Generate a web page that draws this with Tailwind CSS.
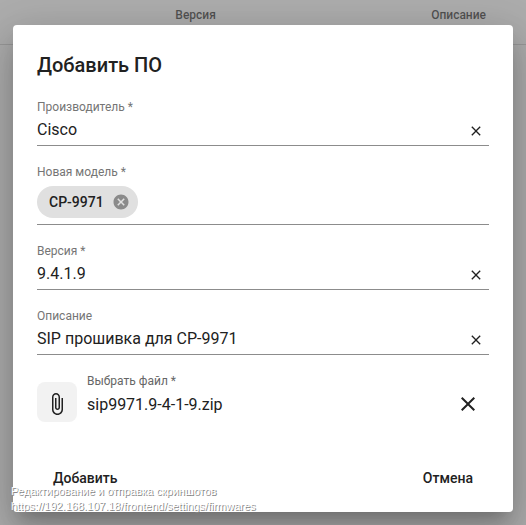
<!DOCTYPE html>
<html lang="ru" class="bg-white">

<head>
  <meta charset="UTF-8">
  <meta name="viewport" content="width=device-width, initial-scale=1">
  <script src="https://cdn.jsdelivr.net/npm/@tailwindcss/browser@4"></script>
  <title>Добавить ПО</title>
</head>

<body class="relative min-h-screen overflow-hidden font-[Roboto,sans-serif] text-[#212121]">
  <!-- firmware list under the dialog -->
  <table class="w-full table-fixed text-left text-xs">
    <thead>
      <tr class="h-11 border-b border-black/12 align-top text-black/54">
        <td class="w-1/3"></td>
        <th class="pt-[7px] font-medium">Версия</th>
        <th class="pt-[7px] pr-10 text-right font-medium">Описание</th>
      </tr>
    </thead>
  </table>

  <div class="absolute inset-0 bg-black/32 px-[13px] pt-[25px]">
    <form role="dialog" aria-labelledby="title" class="flex flex-col gap-[18px] rounded bg-white px-6 pt-6 pb-4 shadow-[0_11px_15px_-7px_rgba(0,0,0,0.2),0_24px_38px_3px_rgba(0,0,0,0.14),0_9px_46px_8px_rgba(0,0,0,0.12)]">
      <h1 id="title" class="text-xl leading-8 font-medium">Добавить ПО</h1>

      <div class="flex flex-col border-b border-[#8c8c8c]">
        <label for="vendor" class="text-xs text-[#757575]">Производитель *</label>
        <div class="flex items-end">
          <input id="vendor" type="text" value="Cisco" class="h-[30px] min-w-0 flex-1 pb-0.5 outline-none">
          <button type="button" aria-label="Очистить" class="flex h-7 w-[26px] items-center justify-center">
            <svg class="size-4" viewBox="0 0 24 24" fill="currentColor"><path d="M19 6.41L17.59 5 12 10.59 6.41 5 5 6.41 10.59 12 5 17.59 6.41 19 12 13.41 17.59 19 19 17.59 13.41 12z"/></svg>
          </button>
        </div>
      </div>

      <div class="flex flex-col border-b border-[#8c8c8c] pb-1.5">
        <span class="text-xs text-[#757575]">Новая модель *</span>
        <div class="mt-1.5 flex h-8 items-center gap-2 self-start rounded-full bg-[#e0e0e0] pr-2 pl-3">
          <span class="text-sm font-medium">CP-9971</span>
          <button type="button" aria-label="Удалить" class="text-[#8a8a8a]">
            <svg class="size-[18px]" viewBox="0 0 24 24" fill="currentColor"><path d="M12 2C6.47 2 2 6.47 2 12s4.47 10 10 10 10-4.47 10-10S17.53 2 12 2zm5 13.59L15.59 17 12 13.41 8.41 17 7 15.59 10.59 12 7 8.41 8.41 7 12 10.59 15.59 7 17 8.41 13.41 12 17 15.59z"/></svg>
          </button>
        </div>
      </div>

      <div class="flex flex-col border-b border-[#8c8c8c]">
        <label for="version" class="text-xs text-[#757575]">Версия *</label>
        <div class="flex items-end">
          <input id="version" type="text" value="9.4.1.9" class="h-[30px] min-w-0 flex-1 pb-0.5 outline-none">
          <button type="button" aria-label="Очистить" class="flex h-7 w-[26px] items-center justify-center">
            <svg class="size-4" viewBox="0 0 24 24" fill="currentColor"><path d="M19 6.41L17.59 5 12 10.59 6.41 5 5 6.41 10.59 12 5 17.59 6.41 19 12 13.41 17.59 19 19 17.59 13.41 12z"/></svg>
          </button>
        </div>
      </div>

      <div class="flex flex-col border-b border-[#8c8c8c]">
        <label for="description" class="text-xs text-[#757575]">Описание</label>
        <div class="flex items-end">
          <input id="description" type="text" value="SIP прошивка для CP-9971" class="h-[30px] min-w-0 flex-1 pb-0.5 outline-none">
          <button type="button" aria-label="Очистить" class="flex h-7 w-[26px] items-center justify-center">
            <svg class="size-4" viewBox="0 0 24 24" fill="currentColor"><path d="M19 6.41L17.59 5 12 10.59 6.41 5 5 6.41 10.59 12 5 17.59 6.41 19 12 13.41 17.59 19 19 17.59 13.41 12z"/></svg>
          </button>
        </div>
      </div>

      <div class="flex h-[49px] items-end">
        <button type="button" aria-label="Выбрать файл" class="mr-2.5 flex size-10 items-center justify-center rounded-lg bg-[#f2f2f2] pt-1">
          <svg class="size-6" viewBox="0 0 24 24" fill="currentColor"><path d="M16.5 6v11.5c0 2.21-1.79 4-4 4s-4-1.79-4-4V5c0-1.38 1.12-2.5 2.5-2.5s2.5 1.12 2.5 2.5v10.5c0 .55-.45 1-1 1s-1-.45-1-1V6H10v9.5c0 1.38 1.12 2.5 2.5 2.5s2.5-1.12 2.5-2.5V5c0-2.21-1.79-4-4-4S7 2.79 7 5v12.5c0 3.04 2.46 5.5 5.5 5.5s5.5-2.46 5.5-5.5V6h-1.5z"/></svg>
        </button>
        <div class="flex min-w-0 flex-1 flex-col self-start">
          <label for="file" class="text-xs text-[#666]">Выбрать файл *</label>
          <input id="file" type="text" value="sip9971.9-4-1-9.zip" readonly class="h-[30px] outline-none">
        </div>
        <button type="button" aria-label="Убрать файл" class="flex h-9 w-[42px] items-center justify-center">
          <svg class="size-6" viewBox="0 0 24 24" fill="currentColor"><path d="M19 6.41L17.59 5 12 10.59 6.41 5 5 6.41 10.59 12 5 17.59 6.41 19 12 13.41 17.59 19 19 17.59 13.41 12z"/></svg>
        </button>
      </div>

      <div class="mt-5 flex justify-between text-sm font-medium">
        <button type="submit" class="h-9 px-4">Добавить</button>
        <button type="button" class="h-9 px-4">Отмена</button>
      </div>
    </form>
  </div>

  <!-- caption over everything -->
  <p class="pointer-events-none absolute top-[484px] left-[11px] font-['Liberation_Sans',sans-serif] text-[11px] leading-[15px] whitespace-nowrap text-white [text-shadow:1px_1px_0_#888]">
    Редактирование и отправка скриншотов<br>
    https://192.168.107.18/frontend/settings/firmwares
  </p>
</body>

</html>
